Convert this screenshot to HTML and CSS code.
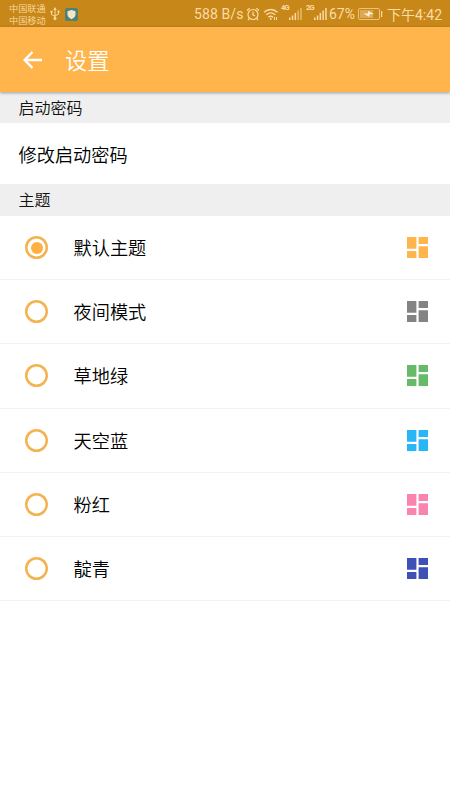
FILE: index.html
```html
<!DOCTYPE html>
<html lang="zh-CN">
<head>
<meta charset="utf-8">
<title>设置</title>
<link rel="stylesheet" href="styles.css">
</head>
<body>
<svg width="0" height="0" class="defs">
  <symbol id="tiles" viewBox="0 0 21 21"><path d="M0 0h9.400v11.700H0zM0 14h9.400v7H0zM11.600 0H21v7h-9.400zM11.600 9.300H21V21h-9.400z"/></symbol>
</svg>
<header class="status">
  <div class="carriers"><span>中国联通</span><span>中国移动</span></div>
  <svg class="usb" width="10" height="14" viewBox="0 0 10 14" fill="none" stroke="currentColor"><path d="M5 2v9M1.500 5v2.500L5 9.500M8.500 4.500V7L5 9"/><path d="M5 0l1.700 3H3.300zM.5 3.800h2v2h-2zM7.500 3.500h2v2h-2z" fill="currentColor" stroke="none"/><circle cx="5" cy="11.500" r="1.500" fill="currentColor" stroke="none"/></svg>
  <svg class="guard" width="13" height="13" viewBox="0 0 13 13"><rect width="13" height="13" rx="2" fill="#4b8379"/><path d="M6.500 2l4 1.200v3.400c0 2.300-1.800 3.700-4 4.600-2.200-.9-4-2.300-4-4.600V3.200z" fill="#f2e6c8"/></svg>
  <div class="indicators">
    <span class="speed">588 B/s</span>
    <svg class="alarm" width="14" height="14" viewBox="0 0 14 14" fill="none" stroke="currentColor" stroke-width="1.200"><circle cx="7" cy="7.500" r="5"/><path d="M7 4.500v3.300l2 1.200M1 3.500L3.700 1.200M13 3.500l-2.700-2.300M3.300 11.500L2 13M10.700 11.500L12 13"/></svg>
    <svg class="wifi" width="16" height="13" viewBox="0 0 16 13" fill="none" stroke="currentColor" stroke-width="1.400"><path d="M1 4.200c4-3.600 9.500-3.600 13.500 0M3.200 6.800c2.800-2.400 6.200-2.400 9 0M5.300 9.200c1.600-1.300 3.200-1.300 4.800 0"/><circle cx="7.700" cy="11" r="1" fill="currentColor" stroke="none"/><path d="M11.500 9v3M13.500 9v3" stroke-width="1"/></svg>
    <span class="net">4G</span>
    <svg class="signal" width="13" height="12" viewBox="0 0 13 12" fill="currentColor"><path d="M0 9.500h1.500V12H0zM2.800 7.500h1.500V12H2.800zM5.600 5h1.500v7H5.600z"/><path d="M8.400 2.500h1.500V12H8.400zM11.200 0h1.500v12h-1.500z" opacity=".6"/></svg>
    <span class="net second">2G</span>
    <svg class="signal" width="13" height="12" viewBox="0 0 13 12" fill="currentColor"><path d="M0 9.500h1.500V12H0zM2.800 7.500h1.500V12H2.800zM5.600 5h1.500v7H5.600zM8.400 2.500h1.500V12H8.400zM11.200 0h1.500v12h-1.500z"/></svg>
    <span class="percent">67%</span>
    <svg class="battery" width="25" height="12" viewBox="0 0 25 12"><rect x=".5" y=".5" width="21" height="11" rx="1.500" fill="none" stroke="currentColor" opacity=".7"/><path d="M2 2h13v8H2z" fill="currentColor" opacity=".4"/><path d="M23 3h1.200v6H23z" fill="currentColor"/><path d="M5.500 5.500h4.500V3l6 3.300h-4.500V9z" fill="#fff3d5"/></svg>
    <span class="clock">下午4:42</span>
  </div>
</header>
<nav class="toolbar">
  <svg class="back" width="20" height="18" viewBox="0 0 20 18" fill="none" stroke="#fff" stroke-width="2.400"><path d="M9.500 1L1.700 9l7.800 8M2 9h17"/></svg>
  <h1>设置</h1>
</nav>
<main>
  <h2 class="section">启动密码</h2>
  <div class="entry">修改启动密码</div>
  <h2 class="section themes">主题</h2>
  <ul class="list">
    <li><i class="radio on"></i><span>默认主题</span><svg class="tile orange"><use href="#tiles"/></svg></li>
    <li><i class="radio"></i><span>夜间模式</span><svg class="tile gray"><use href="#tiles"/></svg></li>
    <li><i class="radio"></i><span>草地绿</span><svg class="tile green"><use href="#tiles"/></svg></li>
    <li><i class="radio"></i><span>天空蓝</span><svg class="tile blue"><use href="#tiles"/></svg></li>
    <li><i class="radio"></i><span>粉红</span><svg class="tile pink"><use href="#tiles"/></svg></li>
    <li><i class="radio"></i><span>靛青</span><svg class="tile indigo"><use href="#tiles"/></svg></li>
  </ul>
</main>
</body>
</html>
```
FILE: styles.css
```css
* { box-sizing: border-box; }
body { margin: 0; min-height: 800px; background: #fff; color: #111; font-family: Roboto, "Noto Sans CJK SC", sans-serif; }
.defs { display: block; }
h1, h2, ul { margin: 0; padding: 0; font-weight: 350; }
.status { height: 27px; display: flex; align-items: center; padding-left: 9px; background: #c88719; color: #fbdca3; }
.carriers { display: flex; flex-direction: column; width: 41px; font-size: 9.200px; line-height: 12px; padding-top: 2px; white-space: nowrap; font-weight: 350; }
.status svg { flex: none; }
.usb { margin-top: 1px; }
.guard { margin: 1px 0 0 5px; }
.indicators { display: flex; align-items: center; margin-left: auto; padding: 1px 9px 0 0; white-space: nowrap; }
.speed { width: 52px; font-size: 14px; letter-spacing: .1px; }
.wifi { margin-left: 3px; }
.net { width: 8px; margin-left: 2px; font-size: 7.500px; line-height: 8px; font-weight: 700; letter-spacing: -.7px; align-self: flex-start; margin-top: 0; }
.second { margin-left: 4px; }
.percent { width: 29px; margin-left: 2px; font-size: 14px; }
.battery { margin-right: 4px; }
.clock { width: 54px; font-size: 14px; }
.toolbar { position: relative; height: 65px; display: flex; align-items: center; padding-left: 23px; background: #ffb54b; color: #fff; box-shadow: 0 1px 3px rgba(0, 0, 0, .35); }
.toolbar h1 { margin-left: 22px; font-size: 22.300px; line-height: 30px; padding-top: 3px; }
.section { height: 31px; display: flex; align-items: center; padding: 0 0 1px 18.500px; background: #efefef; font-size: 16px; }
.themes { height: 32px; padding-bottom: 2px; }
.entry { height: 61px; display: flex; align-items: center; padding: 0 0 0 18.500px; font-size: 18.200px; font-weight: 350; color: #000; }
.list { list-style: none; }
.list li { height: 64.200px; display: flex; align-items: center; padding: 0 22px 0 25px; border-bottom: 1px solid #f3f3f3; font-size: 18.200px; font-weight: 350; color: #000; }
.list span { margin-left: 25.500px; padding-bottom: 1px; }
.radio { width: 23px; height: 23px; box-shadow: inset 0 0 0 2.500px #f3b34f; border-radius: 50%; display: grid; place-items: center; }
.on::after { content: ""; width: 12px; height: 12px; border-radius: 50%; background: #ffb042; }
.tile { width: 21px; height: 21px; margin-left: auto; }
.orange { fill: #ffb54b; }
.gray { fill: #838383; }
.green { fill: #66bb6a; }
.blue { fill: #29b6f6; }
.pink { fill: #f984ae; }
.indigo { fill: #3f51b5; }
```
